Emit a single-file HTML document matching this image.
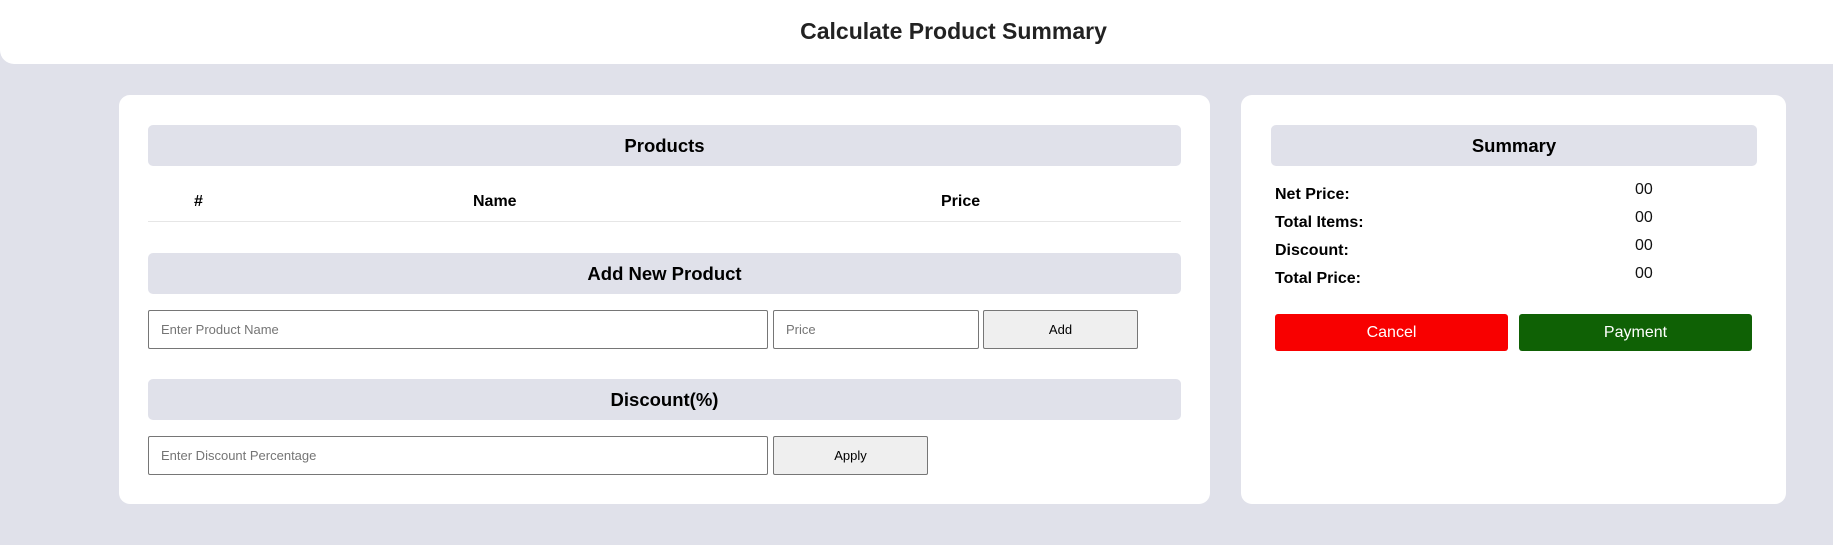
<!DOCTYPE html>
<html><head><meta charset="utf-8"><style>
*{box-sizing:border-box;margin:0;padding:0}
body{width:1833px;height:545px;background:#e0e1ea;font-family:"Liberation Sans",Arial,sans-serif;position:relative;overflow:hidden;color:#000}
.abs{position:absolute}
.hdr{left:0;top:0;width:1833px;height:64px;background:#fff;border-radius:0 0 0 14px;text-align:center;font-weight:bold;font-size:23px;color:#222;line-height:62px;padding-left:74px}
.card{background:#fff;border-radius:11px}
.bar{background:#e0e1ea;border-radius:5px;text-align:center;font-weight:bold;font-size:18.5px;line-height:42px;height:41px}
.th{font-weight:bold;font-size:16px;top:193px}
.inp{border:1px solid #767676;border-radius:2px;height:39px;background:#fff;font-size:13px;color:#757575;padding-left:12px;line-height:37px}
.btn{border:1px solid #767676;border-radius:2px;height:39px;background:#efefef;font-size:13px;text-align:center;line-height:37px;color:#000}
.lbl{font-weight:bold;font-size:16px;left:1275px}
.val{font-size:16px;left:1635px;color:#111}
.b2{top:314px;height:37px;border-radius:3px;color:#fff;font-size:16px;text-align:center;line-height:37px}
</style></head><body>
<div class="abs hdr">Calculate Product Summary</div>
<div class="abs card" style="left:119px;top:95px;width:1091px;height:409px"></div>
<div class="abs card" style="left:1241px;top:95px;width:545px;height:409px"></div>

<div class="abs bar" style="left:148px;top:125px;width:1033px">Products</div>
<div class="abs th" style="left:194px">#</div>
<div class="abs th" style="left:473px">Name</div>
<div class="abs th" style="left:941px">Price</div>
<div class="abs" style="left:148px;top:221px;width:1033px;height:1px;background:#e6e6e6"></div>

<div class="abs bar" style="left:148px;top:253px;width:1033px">Add New Product</div>
<div class="abs inp" style="left:148px;top:310px;width:620px">Enter Product Name</div>
<div class="abs inp" style="left:773px;top:310px;width:206px">Price</div>
<div class="abs btn" style="left:983px;top:310px;width:155px">Add</div>

<div class="abs bar" style="left:148px;top:379px;width:1033px">Discount(%)</div>
<div class="abs inp" style="left:148px;top:436px;width:620px">Enter Discount Percentage</div>
<div class="abs btn" style="left:773px;top:436px;width:155px">Apply</div>

<div class="abs bar" style="left:1271px;top:125px;width:486px">Summary</div>
<div class="abs lbl" style="top:186px">Net Price:</div>
<div class="abs lbl" style="top:214px">Total Items:</div>
<div class="abs lbl" style="top:242px">Discount:</div>
<div class="abs lbl" style="top:270px">Total Price:</div>
<div class="abs val" style="top:181px">00</div>
<div class="abs val" style="top:209px">00</div>
<div class="abs val" style="top:237px">00</div>
<div class="abs val" style="top:265px">00</div>
<div class="abs b2" style="left:1275px;width:233px;background:#f80000">Cancel</div>
<div class="abs b2" style="left:1519px;width:233px;background:#0f6105">Payment</div>
</body></html>
